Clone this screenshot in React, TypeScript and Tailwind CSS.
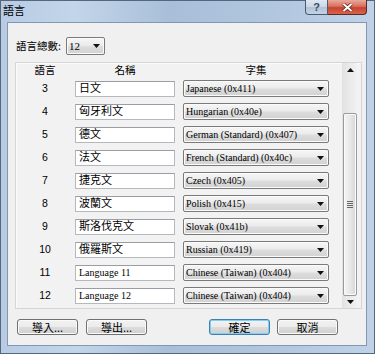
import React from "react";

const rows = [
  { n: 3, name: "日文", cs: "Japanese (0x411)" },
  { n: 4, name: "匈牙利文", cs: "Hungarian (0x40e)" },
  { n: 5, name: "德文", cs: "German (Standard) (0x407)" },
  { n: 6, name: "法文", cs: "French (Standard) (0x40c)" },
  { n: 7, name: "捷克文", cs: "Czech (0x405)" },
  { n: 8, name: "波蘭文", cs: "Polish (0x415)" },
  { n: 9, name: "斯洛伐克文", cs: "Slovak (0x41b)" },
  { n: 10, name: "俄羅斯文", cs: "Russian (0x419)" },
  { n: 11, name: "Language 11", cs: "Chinese (Taiwan) (0x404)" },
  { n: 12, name: "Language 12", cs: "Chinese (Taiwan) (0x404)" },
];

function Caret({ up }: { up?: boolean }) {
  return (
    <svg width="7" height="4" viewBox="0 0 7 4">
      <path d={up ? "M0 4h7L3.5 0z" : "M0 0h7L3.5 4z"} fill="#111" />
    </svg>
  );
}

function Combo({ text, className }: { text: string; className: string }) {
  return (
    <div
      className={`flex items-center justify-between rounded-[2px] border border-[#7a7a7a] bg-[linear-gradient(#f6f6f6_0%,#ececec_45%,#dcdcdc_55%,#d2d2d2_100%)] pl-[2px] pr-[4px] text-[10px] leading-none shadow-[inset_0_0_0_1px_#fbfbfb] ${className}`}
    >
      <span className="whitespace-nowrap">{text}</span>
      <Caret />
    </div>
  );
}

function Button({ label, primary }: { label: string; primary?: boolean }) {
  return (
    <div
      className={`flex h-[16px] w-[61px] items-center justify-center rounded-[3px] border text-[11px] leading-none ${
        primary
          ? "border-[#3c7fb1] bg-[linear-gradient(#f2f2f2_0%,#ebebeb_50%,#dddddd_50%,#cfcfcf_100%)] shadow-[inset_0_0_0_1px_#7fd0f5]"
          : "border-[#707070] bg-[linear-gradient(#f2f2f2_0%,#ebebeb_50%,#dddddd_50%,#cfcfcf_100%)] shadow-[inset_0_0_0_1px_#fafafa]"
      }`}
    >
      {label}
    </div>
  );
}

export default function App() {
  return (
    <div className="flex h-[354px] w-[375px] flex-col bg-[linear-gradient(90deg,#b7cbe3_0%,#c3d5ea_20%,#a9bfd9_45%,#b0c5de_70%,#bfd2e8_100%)] font-['Liberation_Serif','Noto_Sans_CJK_TC',serif] text-black shadow-[inset_0_0_0_1px_#55677f]">
      {/* title bar */}
      <div className="flex h-[22px] items-start justify-between">
        <div className="pl-[3px] pt-[3px] font-['Noto_Sans_CJK_TC',sans-serif] text-[11px] leading-[14px]">語言</div>
        <div className="mr-[8px] flex h-[15px]">
          <div className="flex w-[23px] items-center justify-center rounded-bl-[4px] border border-t-0 border-[#4a5a70] bg-[linear-gradient(#dfe8f2_0%,#c9d6e4_50%,#b2c3d6_51%,#c3d2e3_100%)] font-['Liberation_Sans',sans-serif] text-[11px] font-bold leading-none text-[#3b4a5c]">
            ?
          </div>
          <div className="flex w-[39px] items-center justify-center rounded-br-[4px] border border-l-0 border-t-0 border-[#5a2a24] bg-[linear-gradient(#e9a99c_0%,#d7705f_45%,#c7432f_55%,#d9634c_100%)]">
            <svg width="11" height="9" viewBox="0 0 11 9">
              <path d="M1.5 1l8 7M9.5 1l-8 7" stroke="#5a1e16" strokeWidth="3.4" />
              <path d="M1.5 1l8 7M9.5 1l-8 7" stroke="#fff" strokeWidth="2" />
            </svg>
          </div>
        </div>
      </div>

      {/* client area */}
      <div className="mx-[7px] flex h-[324px] w-[360px] flex-col border border-[#8397b0] bg-[#f0f0f0]">
        <div className="flex items-center pl-[8px] pt-[14px]">
          <div className="w-[50px] font-['Noto_Sans_CJK_TC',sans-serif] text-[10.5px] leading-none">語言總數:</div>
          <Combo text="12" className="h-[18px] w-[39px] text-[11px]" />
        </div>

        <div className="ml-[7px] mt-[7px] flex h-[247px] w-[347px] border border-[#d5d5d5] bg-[#f2f2f2] shadow-[inset_1px_1px_0_#fbfbfb]">
          <div className="flex flex-1 flex-col overflow-hidden pl-[4px]">
            <div className="flex h-[14px] items-center font-['Noto_Sans_CJK_TC',sans-serif] text-[10.5px] leading-none">
              <div className="w-[50px] text-center">語言</div>
              <div className="ml-[5px] w-[100px] text-center">名稱</div>
              <div className="ml-[8px] w-[146px] text-center">字集</div>
            </div>
            {rows.map((r) => (
              <div key={r.n} className="flex h-[23px] shrink-0 items-center">
                <div className="w-[50px] text-center font-['Liberation_Sans',sans-serif] text-[10.5px] leading-none">{r.n}</div>
                <div
                  className={`ml-[5px] flex h-[16px] w-[100px] items-center border border-[#b5b8bd] border-t-[#9a9da3] bg-white pl-[3px] leading-none ${
                    r.n >= 11 ? "text-[10px]" : "text-[11px]"
                  }`}
                >
                  {r.name}
                </div>
                <Combo text={r.cs} className="ml-[8px] h-[17px] w-[146px]" />
              </div>
            ))}
          </div>

          {/* scrollbar */}
          <div className="mr-[4px] flex w-[15px] flex-col border-l border-[#e2e2e2] bg-[linear-gradient(90deg,#e3e3e3,#f1f1f1)]">
            <div className="flex h-[16px] items-center justify-center">
              <Caret up />
            </div>
            <div className="flex-1">
              <div className="mt-[36px] flex h-[183px] items-center justify-center rounded-[2px] border border-[#9a9a9a] bg-[linear-gradient(90deg,#f4f4f4_0%,#e8e8e8_50%,#d6d6d6_100%)] shadow-[inset_0_0_0_1px_#fbfbfb]">
                <div className="flex flex-col gap-[1px]">
                  <div className="h-[1px] w-[6px] bg-[#666]" />
                  <div className="h-[1px] w-[6px] bg-[#666]" />
                  <div className="h-[1px] w-[6px] bg-[#666]" />
                  <div className="h-[1px] w-[6px] bg-[#666]" />
                </div>
              </div>
            </div>
            <div className="flex h-[14px] items-center justify-center">
              <Caret />
            </div>
          </div>
        </div>

        <div className="mt-[10px] flex items-center justify-between pl-[9px] pr-[28px] font-['Noto_Sans_CJK_TC',sans-serif]">
          <div className="flex gap-[8px]">
            <Button label="導入..." />
            <Button label="導出..." />
          </div>
          <div className="flex gap-[7px]">
            <Button label="確定" primary />
            <Button label="取消" />
          </div>
        </div>
      </div>
    </div>
  );
}
